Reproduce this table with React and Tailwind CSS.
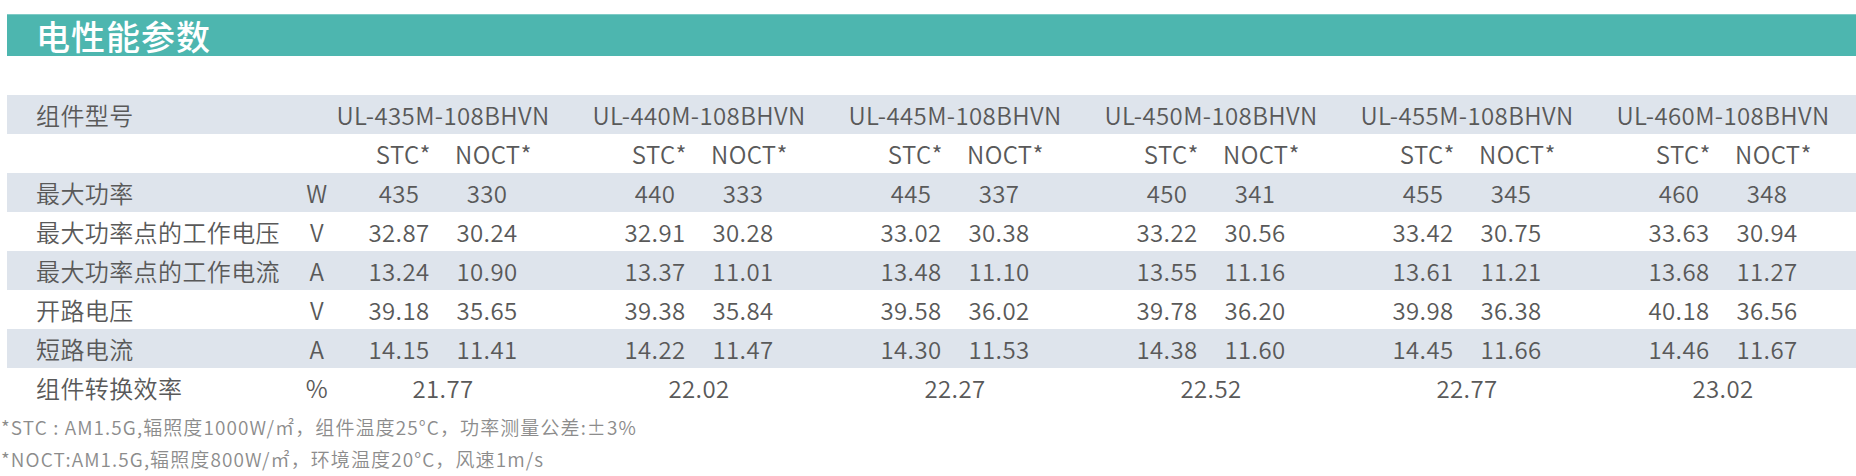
import React from 'react';

const models = ['435', '440', '445', '450', '455', '460'];

const rows = [
  { label: '最大功率', unit: 'W', values: [['435', '330'], ['440', '333'], ['445', '337'], ['450', '341'], ['455', '345'], ['460', '348']] },
  { label: '最大功率点的工作电压', unit: 'V', values: [['32.87', '30.24'], ['32.91', '30.28'], ['33.02', '30.38'], ['33.22', '30.56'], ['33.42', '30.75'], ['33.63', '30.94']] },
  { label: '最大功率点的工作电流', unit: 'A', values: [['13.24', '10.90'], ['13.37', '11.01'], ['13.48', '11.10'], ['13.55', '11.16'], ['13.61', '11.21'], ['13.68', '11.27']] },
  { label: '开路电压', unit: 'V', values: [['39.18', '35.65'], ['39.38', '35.84'], ['39.58', '36.02'], ['39.78', '36.20'], ['39.98', '36.38'], ['40.18', '36.56']] },
  { label: '短路电流', unit: 'A', values: [['14.15', '11.41'], ['14.22', '11.47'], ['14.30', '11.53'], ['14.38', '11.60'], ['14.45', '11.66'], ['14.46', '11.67']] },
];

const efficiency = ['21.77', '22.02', '22.27', '22.52', '22.77', '23.02'];

// one table row: label, unit and the six module groups
const Row = ({ label, unit, shaded, children }) => (
  <div className={`flex h-[39px] items-center ${shaded ? 'bg-[#dee4ec]' : ''}`}>
    <div className="w-[288px] shrink-0 pl-[29px] whitespace-nowrap">{label}</div>
    <div className="w-[44px] shrink-0 text-center">{unit}</div>
    {children}
  </div>
);

// each group is 256px wide, content centred on its first 208px
const Group = ({ children }) => (
  <div className="w-[256px] shrink-0 pr-[48px] flex justify-center whitespace-nowrap">{children}</div>
);

export default function App() {
  return (
    <div
      className="w-full h-[476px] overflow-hidden bg-white text-[#595959]"
      style={{ fontFamily: '"Noto Sans CJK SC", "Noto Sans", sans-serif' }}
    >
      {/* section title bar */}
      <div className="mt-[14px] ml-[7px] h-[42px] bg-[#4db6af] border-t border-[#7fcbc6] flex items-center pl-[29px]">
        <span className="text-[34px] leading-none text-white font-medium tracking-[1px]">电性能参数</span>
      </div>

      <div className="mt-[39px] ml-[7px] text-[24px] font-[350] tracking-[0.4px]">
        <Row label="组件型号" unit="" shaded>
          {models.map((m) => (
            <Group key={m}>UL-{m}M-108BHVN</Group>
          ))}
        </Row>

        <Row label="" unit="">
          {models.map((m) => (
            <Group key={m}>
              <div className="w-[88px] text-right pr-[12px]">STC*</div>
              <div className="w-[88px] text-left pl-[12px]">NOCT*</div>
            </Group>
          ))}
        </Row>

        {rows.map((r, i) => (
          <Row key={r.label + i} label={r.label} unit={r.unit} shaded={i % 2 === 0}>
            {r.values.map(([stc, noct], j) => (
              <Group key={j}>
                <div className="w-[88px] text-center">{stc}</div>
                <div className="w-[88px] text-center">{noct}</div>
              </Group>
            ))}
          </Row>
        ))}

        <Row label="组件转换效率" unit="%">
          {efficiency.map((e) => (
            <Group key={e}>{e}</Group>
          ))}
        </Row>
      </div>

      {/* footnotes */}
      <div className="mt-[4px] pl-[1px] text-[19px] font-[350] leading-[32px] tracking-[1.1px] text-[#8c8c8c] whitespace-nowrap">
        <div>*STC : AM1.5G,辐照度1000W/㎡，组件温度25°C，功率测量公差:±3%</div>
        <div>*NOCT:AM1.5G,辐照度800W/㎡，环境温度20°C，风速1m/s</div>
      </div>
    </div>
  );
}
